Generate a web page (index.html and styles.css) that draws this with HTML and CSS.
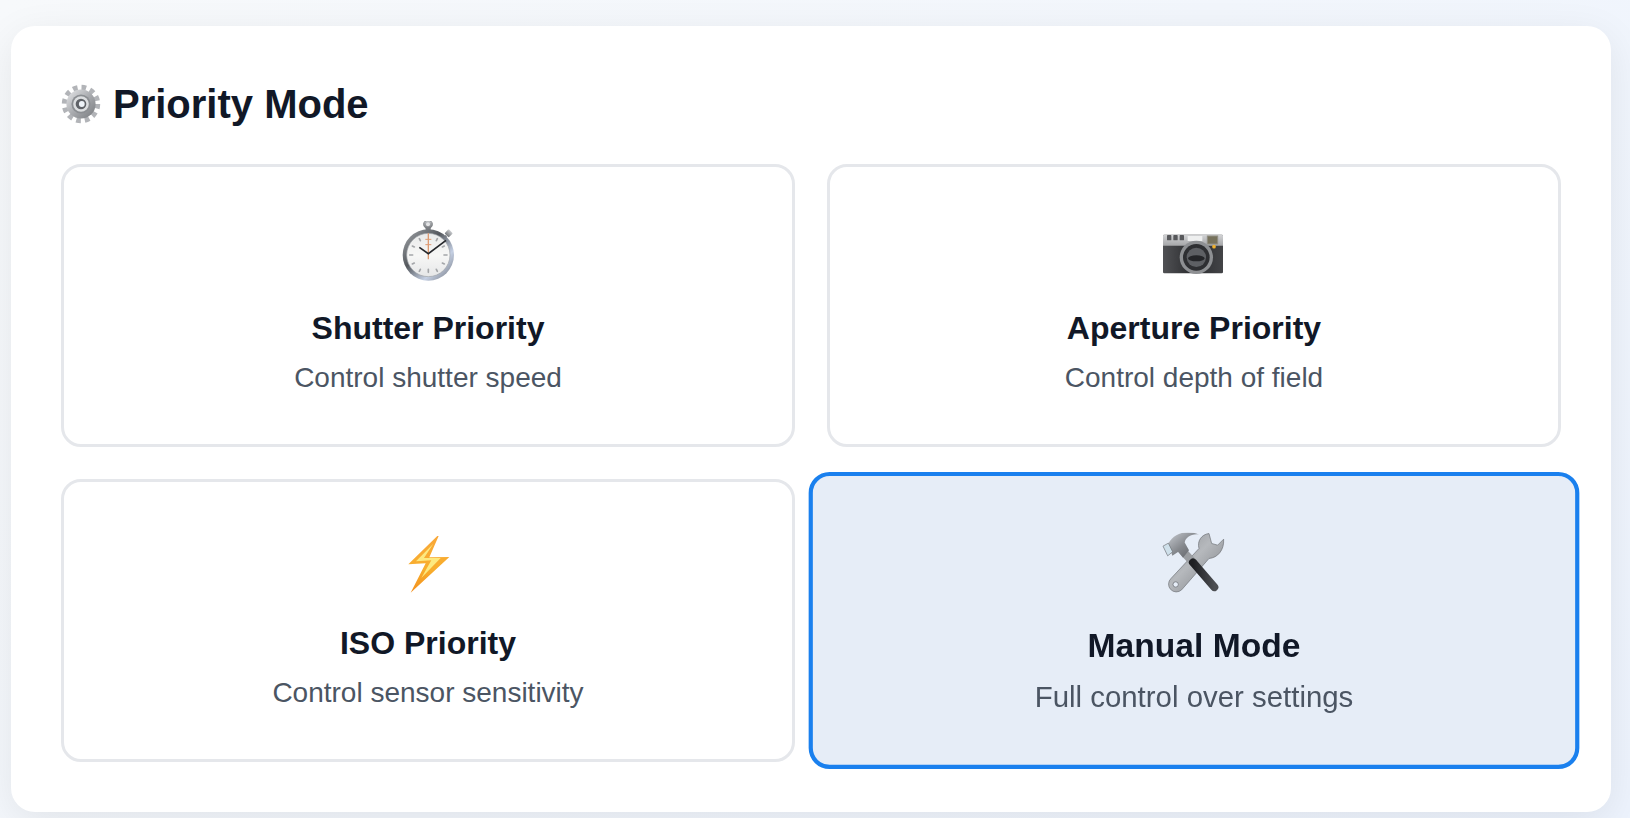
FILE: index.html
```html
<!DOCTYPE html>
<html lang="en">
<head>
<meta charset="utf-8">
<title>Priority Mode</title>
<link rel="stylesheet" href="styles.css">
</head>
<body>
<svg class="defs" width="0" height="0" aria-hidden="true">
  <defs>
    <linearGradient id="steel" x1="0" y1="0" x2="1" y2="1">
      <stop offset="0" stop-color="#e8e9eb"/><stop offset=".5" stop-color="#a9abaf"/><stop offset="1" stop-color="#76797d"/>
    </linearGradient>
    <linearGradient id="rim" x1="0" y1="0" x2="1" y2="1">
      <stop offset="0" stop-color="#a5a8ac"/><stop offset=".4" stop-color="#54585d"/><stop offset=".7" stop-color="#c5d0e4"/><stop offset="1" stop-color="#6d7178"/>
    </linearGradient>
    <linearGradient id="knob" x1="0" y1="0" x2="0" y2="1">
      <stop offset="0" stop-color="#c9cbce"/><stop offset="1" stop-color="#74777b"/>
    </linearGradient>
    <linearGradient id="dial" x1="0" y1="0" x2="0" y2="1">
      <stop offset="0" stop-color="#e9eaea"/><stop offset=".5" stop-color="#f7f7f6"/><stop offset="1" stop-color="#e6e7e8"/>
    </linearGradient>
    <linearGradient id="topband" x1="0" y1="0" x2="0" y2="1">
      <stop offset="0" stop-color="#d2d3d5"/><stop offset="1" stop-color="#a6a7a9"/>
    </linearGradient>
    <linearGradient id="camera" x1="0" y1="0" x2="1" y2="0">
      <stop offset="0" stop-color="#505154"/><stop offset=".5" stop-color="#2a2b2e"/><stop offset="1" stop-color="#434447"/>
    </linearGradient>
    <linearGradient id="bolt" x1="0" y1="0" x2="0" y2="1">
      <stop offset="0" stop-color="#f9a73a"/><stop offset=".6" stop-color="#f8ae2c"/><stop offset="1" stop-color="#f3901f"/>
    </linearGradient>
    <linearGradient id="head" x1="0" y1="0" x2="1" y2="1">
      <stop offset="0" stop-color="#c8ccd2"/><stop offset=".5" stop-color="#85888d"/><stop offset="1" stop-color="#585b60"/>
    </linearGradient>
    <linearGradient id="wrench" x1="0" y1="0" x2="1" y2="1">
      <stop offset="0" stop-color="#8a8d92"/><stop offset=".45" stop-color="#b6b9bd"/><stop offset="1" stop-color="#777a7f"/>
    </linearGradient>
    <linearGradient id="grip" x1="0" y1="0" x2="1" y2="0">
      <stop offset="0" stop-color="#1e1f22"/><stop offset="1" stop-color="#4c4e52"/>
    </linearGradient>
  </defs>
</svg>
<main class="panel">
  <h1 class="heading">
    <svg class="heading-icon" viewBox="0 0 40 40" aria-hidden="true">
      <circle cx="20" cy="20" r="16.4" fill="none" stroke="#b2b4b8" stroke-width="5.6" stroke-dasharray="4.6 3.99"/>
      <circle cx="20" cy="20" r="14.6" fill="url(#steel)"/>
      <circle cx="20" cy="20" r="9.6" fill="#8b8e92"/>
      <circle cx="20" cy="20" r="7.8" fill="#dcdee0"/>
      <circle cx="20" cy="20" r="5.3" fill="#5f6267"/>
      <circle cx="20.8" cy="20" r="2.9" fill="#eef3f8"/>
    </svg>
    <span>Priority Mode</span>
  </h1>
  <div class="grid">
    <section class="card">
      <svg class="icon" viewBox="45 63 198 198" aria-hidden="true">
        <circle cx="144" cy="73" r="13" fill="url(#knob)" stroke="#7d8084" stroke-width="3"/>
        <circle cx="144" cy="73" r="6" fill="#e3e4e6"/>
        <rect x="137" y="83" width="15" height="10" fill="#7a7d81"/>
        <g transform="rotate(45 206 100)"><rect x="197" y="91" width="18" height="18" rx="3" fill="url(#knob)"/></g>
        <path d="M190 116l9-9" stroke="#75787c" stroke-width="6"/>
        <circle cx="145" cy="165" r="77" fill="url(#rim)"/>
        <circle cx="145" cy="165" r="65" fill="url(#dial)"/>
        <circle cx="145" cy="165" r="65" fill="none" stroke="#9fa3a8" stroke-width="2"/>
        <g stroke="#a4a6a9" stroke-width="5" stroke-linecap="round">
          <path d="M145 208v9M89 165h9M192 165h9M118 116l3 6M172 116l-3 6M118 214l3-6M172 214l-3-6M97 138l6 3M193 138l-6 3M97 192l6-3M193 192l-6-3"/>
        </g>
        <path d="M145 100v78" stroke="#dd9a72" stroke-width="4"/>
        <path d="M136 118h18M136 134h18" stroke="#dd9a72" stroke-width="3"/>
        <path d="M118 142l27 19 53-40" fill="none" stroke="#26282c" stroke-width="5"/>
      </svg>
      <h2 class="title">Shutter Priority</h2>
      <p class="desc">Control shutter speed</p>
    </section>
    <section class="card">
      <svg class="icon" viewBox="66 33 198 198" aria-hidden="true">
        <rect x="72" y="74" width="180" height="116" rx="4" fill="url(#camera)"/>
        <path d="M72 107V78a4 4 0 0 1 4-4h172a4 4 0 0 1 4 4v29z" fill="url(#topband)"/>
        <g fill="#57585b"><rect x="84" y="75" width="13" height="16" rx="2"/><rect x="103" y="75" width="13" height="16" rx="2"/><rect x="122" y="75" width="13" height="16" rx="2"/></g>
        <rect x="146" y="78" width="44" height="15" fill="#eeefef"/>
        <rect x="205" y="78" width="31" height="24" fill="#77725c" stroke="#8f8d82" stroke-width="3"/>
        <circle cx="225" cy="110" r="5.5" fill="#efb12e"/>
        <circle cx="172" cy="142" r="50" fill="#8e9093"/>
        <circle cx="172" cy="142" r="40" fill="#2e2f32"/>
        <circle cx="172" cy="142" r="29" fill="#5e6064"/>
        <ellipse cx="172" cy="145" rx="25" ry="9" fill="#252629"/>
      </svg>
      <h2 class="title">Aperture Priority</h2>
      <p class="desc">Control depth of field</p>
    </section>
    <section class="card">
      <svg class="icon" viewBox="15 51 198 198" aria-hidden="true">
        <path d="M149 44L55 136l52-3-45 88L178 114l-60 1z" fill="url(#bolt)"/>
        <path d="M130 74L78 127l46-3-30 53 58-60-50 0z" fill="#fde97f"/>
      </svg>
      <h2 class="title">ISO Priority</h2>
      <p class="desc">Control sensor sensitivity</p>
    </section>
    <section class="card card-selected">
      <svg class="icon" viewBox="61 53 208 208" aria-hidden="true">
        <path d="M210 55C187 58 174 78 180 100L96 190a23 23 0 1 0 32 34L210 130C236 128 256 105 254 72L236 90 218 85z" fill="url(#wrench)" stroke="#6c6f74" stroke-width="2"/>
        <circle cx="110" cy="208" r="8" fill="#e6edf7" stroke="#5f6267" stroke-width="2"/>
        <path d="M124 100L166 146" stroke="#9a9da1" stroke-width="24"/>
        <path d="M162 142L226 216" stroke="url(#grip)" stroke-width="24" stroke-linecap="round"/>
        <path d="M88 85C105 55 140 42 180 58C155 55 140 68 137 82L150 105 132 128 118 110 100 122z" fill="url(#head)"/>
        <path d="M72 93L88 84 101 110 86 122z" fill="#cfe0ea" stroke="#6c6f74" stroke-width="2"/>
      </svg>
      <h2 class="title">Manual Mode</h2>
      <p class="desc">Full control over settings</p>
    </section>
  </div>
</main>
</body>
</html>
```

FILE: styles.css
```css
* { box-sizing: border-box; }
html, body { margin: 0; height: 100%; }
body {
  height: 818px;
  overflow: hidden;
  padding: 26px 19px 0 11px;
  background: linear-gradient(135deg, #f7f9fb 0%, #edf3fd 100%);
  font-family: "Liberation Sans", Arial, sans-serif;
}
.defs { position: absolute; }
.panel {
  width: 1600px;
  height: 786px;
  padding: 50px;
  background: #fff;
  border-radius: 24px;
  box-shadow: 0 10px 40px rgba(0, 0, 0, 0.08);
}
.heading {
  display: flex;
  align-items: center;
  gap: 12px;
  height: 56px;
  margin: 0 0 32px;
  font-size: 40px;
  font-weight: 700;
  color: #111827;
}
.heading-icon { width: 40px; height: 40px; flex: none; filter: blur(0.3px); }
.grid {
  display: grid;
  grid-template-columns: 1fr 1fr;
  gap: 32px;
}
.card {
  height: 283px;
  display: flex;
  flex-direction: column;
  align-items: center;
  padding: 54px 20px 0;
  background: #fff;
  border: 3px solid #e5e7eb;
  border-radius: 20px;
}
.card-selected {
  border-color: #1a80ee;
  border-width: 4px;
  padding-top: 54.2px;
  background: #e6edf7;
  transform: scale(1.05);
}
.icon { width: 66px; height: 66px; flex: none; filter: blur(0.4px); }
.title {
  margin: 21px 0 0;
  font-size: 32px;
  line-height: 40px;
  font-weight: 700;
  color: #111827;
}
.desc {
  margin: 15px 0 0;
  font-size: 28px;
  line-height: 30px;
  color: #4b5563;
}
```
